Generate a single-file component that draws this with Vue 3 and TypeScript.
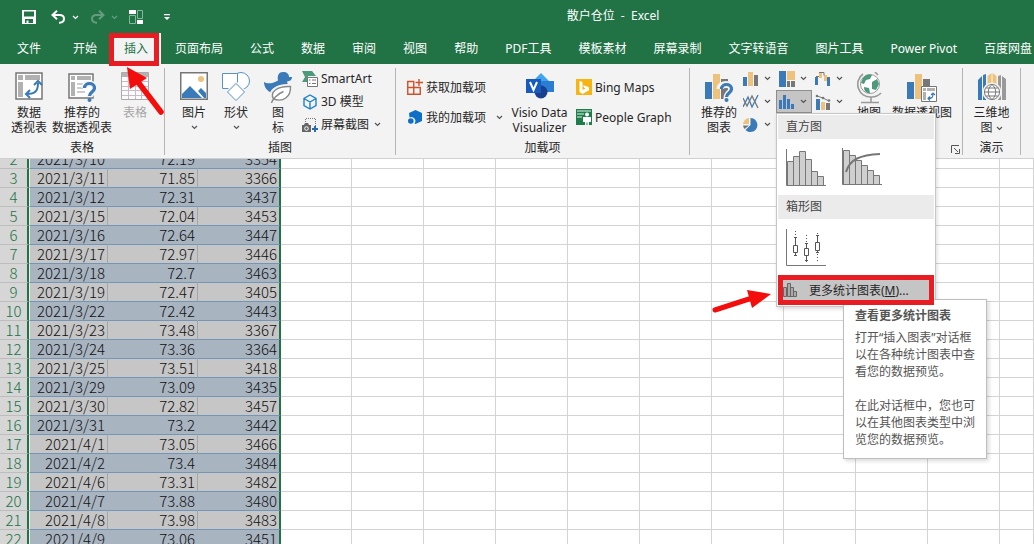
<script setup lang="ts">
interface Row {
  no: number
  date: string
  position: string
  index: number
}

const tabs: string[] = [
  '文件', '开始', '插入', '页面布局', '公式', '数据', '审阅', '视图', '帮助',
  'PDF工具', '模板素材', '屏幕录制', '文字转语音', '图片工具', 'Power Pivot', '百度网盘',
]
const activeTab = '插入'

const values: [string, string, number][] = [
  ['2021/3/10', '72.19', 3354],
  ['2021/3/11', '71.85', 3366],
  ['2021/3/12', '72.31', 3437],
  ['2021/3/15', '72.04', 3453],
  ['2021/3/16', '72.64', 3447],
  ['2021/3/17', '72.97', 3446],
  ['2021/3/18', '72.7', 3463],
  ['2021/3/19', '72.47', 3405],
  ['2021/3/22', '72.42', 3443],
  ['2021/3/23', '73.48', 3367],
  ['2021/3/24', '73.36', 3364],
  ['2021/3/25', '73.51', 3418],
  ['2021/3/29', '73.09', 3435],
  ['2021/3/30', '72.82', 3457],
  ['2021/3/31', '73.2', 3442],
  ['2021/4/1', '73.05', 3466],
  ['2021/4/2', '73.4', 3484],
  ['2021/4/6', '73.31', 3482],
  ['2021/4/7', '73.88', 3480],
  ['2021/4/8', '73.98', 3483],
  ['2021/4/9', '73.06', 3451],
]
const rows: Row[] = values.map(([date, position, index], i) => ({ no: i + 2, date, position, index }))
const emptyColumns = 11
</script>

<template>
  <div class="excel">
    <svg class="sprite" aria-hidden="true">
      <symbol id="chevron" viewBox="0 0 7 5">
        <path d="M1 1l2.5 2.5L6 1" fill="none" stroke="currentColor" stroke-width="1.2" />
      </symbol>
    </svg>

    <header class="top">
      <div class="titlebar">
        <div class="quick">
          <button type="button" aria-label="保存">
            <svg width="14" height="14" viewBox="0 0 14 14"><path d="M0 0h14v14H0zM2 1.500v5h10v-5zM3 9v4h1.500v-2.500h2V13H11V9z" fill="#fff" fill-rule="evenodd" /></svg>
          </button>
          <button type="button" class="undo" aria-label="撤消">
            <svg width="15" height="14" viewBox="0 0 15 14"><path d="M6 0.800L1.500 5 6 9.200M2 5h6.500c6 0 6 7.500 0 7.800H8" fill="none" stroke="#fff" stroke-width="2" /></svg>
            <svg class="chev" width="7" height="5"><use href="#chevron" /></svg>
          </button>
          <button type="button" class="undo faded" aria-label="恢复">
            <svg width="15" height="14" viewBox="0 0 15 14"><path d="M9 0.800L13.500 5 9 9.200M13 5H6.500c-6 0-6 7.500 0 7.800H7" fill="none" stroke="#fff" stroke-width="2" /></svg>
            <svg class="chev" width="7" height="5"><use href="#chevron" /></svg>
          </button>
          <button type="button" class="layout" aria-label="窗格">
            <svg width="15" height="14" viewBox="0 0 15 14"><path d="M0 0h7v4H0zM8 10h6v4H8z" fill="#fff" /><path d="M0.500 5.500h6v8h-6zM8.500 0.500h5v8h-5z" fill="none" stroke="#86b79b" /></svg>
          </button>
          <button type="button" aria-label="自定义快速访问工具栏">
            <svg width="6" height="7" viewBox="0 0 6 7"><path d="M0 0h6v1.200H0zM0 3h6L3 6z" fill="#fff" /></svg>
          </button>
        </div>
        <div class="title">散户仓位&nbsp; -&nbsp; Excel</div>
      </div>
      <nav class="tabs">
        <button v-for="t in tabs" :key="t" type="button" class="tab" :class="{ active: t === activeTab }">
          {{ t }}
          <span v-if="t === activeTab" class="frame"></span>
          <svg v-if="t === activeTab" class="arrow-up" width="40" height="50" viewBox="0 0 40 50">
            <path d="M12 16L35 46" stroke="#f30d0d" stroke-width="5.500" stroke-linecap="round" />
            <path d="M1 1L21 12 4 23z" fill="#f30d0d" />
          </svg>
        </button>
      </nav>
    </header>

    <section class="ribbon">
      <div class="group">
        <div class="body g1">
          <button type="button" class="big">
            <svg width="28" height="28" viewBox="0 0 28 28">
              <path d="M1 1h26v26H1z" fill="#fff" stroke="#777" stroke-width="1.500" />
              <path d="M3 3h5v5H3zM10 3h15v5H10zM3 10h5v15H3z" fill="#b1b1b1" />
              <path d="M12 22c8 0 11-3 11-11M19 13l4-4 4 4M15 18l-4 4 4 4" fill="none" stroke="#3b7ab8" stroke-width="2" />
            </svg>
            <span>数据<br>透视表</span>
          </button>
          <button type="button" class="big wide">
            <svg width="28" height="30" viewBox="0 0 28 30">
              <path d="M1 2h24v24H1z" fill="#fff" stroke="#777" stroke-width="1.500" />
              <path d="M3 4h4v4H3zM9 4h14v4H9zM3 10h4v14H3z" fill="#b1b1b1" />
              <path d="M9 12h6M9 16h6M9 20h8" stroke="#999" />
              <path d="M16 16c0-6 11-6 11 0 0 4-5 4-5 9" fill="none" stroke="#f3f3f3" stroke-width="6" />
              <path d="M16.500 16c0-6 10-6 10 0 0 4-5 4-5 8" fill="none" stroke="#3b7ab8" stroke-width="3.200" />
              <circle cx="21.500" cy="28" r="2" fill="#3b7ab8" />
            </svg>
            <span>推荐的<br>数据透视表</span>
          </button>
          <button type="button" class="big disabled" disabled>
            <svg width="28" height="28" viewBox="0 0 28 28">
              <path d="M.5.5h27v27H.5z" fill="#fdfafd" stroke="#aaa" />
              <path d="M1 1h26v4H1z" fill="#b3b3b3" />
              <path d="M1 9.500h26M1 14.500h26M1 18.500h26M1 23.500h26M7.500 5v22M14.500 5v22M20.500 5v22" stroke="#c4bec4" />
            </svg>
            <span>表格</span>
          </button>
        </div>
        <div class="label">表格</div>
      </div>
      <span class="sep"></span>

      <div class="group g2w">
        <div class="body g1">
          <button type="button" class="big">
            <svg width="28" height="28" viewBox="0 0 28 28">
              <path d="M.75.75h26.500v26.500H.75z" fill="#fff" stroke="#777" stroke-width="1.500" />
              <circle cx="21" cy="7" r="3" fill="#edc27c" />
              <path d="M2 26v-4l8-8 12 12zM18 19l3-3 5 5v5h-2z" fill="#3b7ab8" />
            </svg>
            <span>图片</span>
            <svg class="chev under" width="7" height="5"><use href="#chevron" /></svg>
          </button>
          <button type="button" class="big">
            <svg width="30" height="30" viewBox="0 0 30 30">
              <circle cx="20" cy="9" r="8.500" fill="#fff" stroke="#5a92c5" />
              <path d="M1.500 1.500h15v15h-15z" fill="#fff" stroke="#5a92c5" />
              <path d="M15 11l9 9-9 9-9-9z" fill="#fff" stroke="#f3f3f3" stroke-width="3" />
              <path d="M15 11.500l8.500 8.500-8.500 8.500L6.500 20z" fill="#fff" stroke="#5a92c5" />
            </svg>
            <span>形状</span>
            <svg class="chev under" width="7" height="5"><use href="#chevron" /></svg>
          </button>
          <button type="button" class="big">
            <svg width="28" height="31" viewBox="0 0 28 31">
              <path d="M0 10c3 2 8 2 14-1.500C13 3 15 0 19 0c4 0 6 2 6 5h3c0 3-2 4-5 4.500 1 3 1 5 0 7L8 21C3 19 0 15 0 10z" fill="#3b7ab8" />
              <path d="M9 27C5 20 12 13 27 14c1 11-7 17-18 13z" fill="#fff" stroke="#f3f3f3" stroke-width="4" />
              <path d="M9.500 27C5.500 20 13 14 26.500 14.500 27 25 19 30.500 9.500 27z" fill="#fff" stroke="#888" stroke-width="1.400" />
              <path d="M7.500 31c1-4 6-9 12-11.500" fill="none" stroke="#888" stroke-width="1.400" />
            </svg>
            <span>图<br>标</span>
          </button>
          <div class="col">
            <button type="button" class="small">
              <svg width="16" height="16" viewBox="0 0 16 16"><path d="M0 0h10l4 5H6v6H0l3-5z" fill="#4c9a7c" /><path d="M5.500 6.500h10v9h-10z" fill="#fff" stroke="#777" /><path d="M7 9h1.500M10 9h4M7 12.500h1.500M10 12.500h4" stroke="#777" /></svg>
              SmartArt
            </button>
            <button type="button" class="small">
              <svg width="16" height="16" viewBox="0 0 16 16"><path d="M8 1l6 3.500v7L8 15l-6-3.500v-7zM2 4.500L8 8l6-3.500M8 8v7" fill="none" stroke="#2182c4" stroke-width="1.400" /></svg>
              3D 模型
            </button>
            <button type="button" class="small">
              <svg width="16" height="16" viewBox="0 0 16 16"><path d="M4 1.500h10M3.500 2v4M13.500 2v7" stroke="#777" stroke-dasharray="1 1" /><path d="M0 8h2l1-2h3l1 2h2v7H0z" fill="#666" /><circle cx="4.500" cy="11.500" r="1.800" fill="none" stroke="#fff" /><path d="M13 9v6M10 12h6" stroke="#2b6cb0" stroke-width="2" /></svg>
              屏幕截图
              <svg class="chev" width="7" height="5"><use href="#chevron" /></svg>
            </button>
          </div>
        </div>
        <div class="label">插图</div>
      </div>
      <span class="sep"></span>

      <div class="group g3w">
        <div class="body g3">
          <div class="col addins">
            <button type="button" class="small">
              <svg width="16" height="16" viewBox="0 0 16 16"><path d="M.75 2.500h6v12.750h-6zM.75 8.500h12.500v6.750H.75M6.750 8.500v6.750M12 0v7M8.500 3.500H16" fill="none" stroke="#d1502a" stroke-width="1.400" /></svg>
              获取加载项
            </button>
            <button type="button" class="small spread">
              <svg width="16" height="16" viewBox="0 0 16 16"><path d="M8.500 1L15 4v8l-6.500 3-1-.5a4 4 0 0 0-5-6L2 4z" fill="#0f6fc6" /><circle cx="3.800" cy="12" r="2.800" fill="#0f6fc6" /></svg>
              我的加载项
              <svg class="chev" width="7" height="5"><use href="#chevron" /></svg>
            </button>
          </div>
          <button type="button" class="big visio">
            <svg width="28" height="28" viewBox="0 0 28 28">
              <path d="M15 1l10 10-10 10L5 11z" fill="#41a5ee" />
              <path d="M14 9h14v11H14z" fill="#2b7cd3" />
              <circle cx="15" cy="20" r="6.500" fill="#1a3f8f" />
              <path d="M0 7h15v14H0z" fill="#185abd" />
              <path d="M4 10l3.500 8L11 10" fill="none" stroke="#fff" stroke-width="2" />
            </svg>
            <span>Visio Data<br>Visualizer</span>
          </button>
          <div class="col">
            <button type="button" class="small">
              <svg width="16" height="16" viewBox="0 0 16 16"><path d="M0 0h16v16H0z" fill="#f6b513" /><path d="M3.500 2l3 1v8l3-1.500L8 8.500 7 6l6 2.200v3L6.500 15l-3-2z" fill="#fff" /></svg>
              Bing Maps
            </button>
            <button type="button" class="small">
              <svg width="16" height="16" viewBox="0 0 16 16"><path d="M0 0h16v16H0z" fill="#1e7d4b" /><path d="M1 2h14M1 5h7M1 8h5" stroke="#9fcbb3" stroke-width="1.500" /><circle cx="11" cy="5.500" r="2" fill="#fff" /><path d="M7 8h8v5h-2v3h-1.500v-2.500h-1V16H9v-3H7z" fill="#fff" /></svg>
              People Graph
            </button>
          </div>
        </div>
        <div class="label">加载项</div>
      </div>
      <span class="sep"></span>

      <div class="group g4w">
        <div class="body g4">
          <button type="button" class="big">
            <svg width="28" height="30" viewBox="0 0 28 30">
              <path d="M0 10h7v17H0z" fill="#3b7ab8" /><path d="M8 2h7v25H8z" fill="#edc27c" /><path d="M16 7h7v20h-7z" fill="#777" />
              <path d="M15 17c0-6 12-6 12 0 0 4-5 4-5 9v4" fill="none" stroke="#f3f3f3" stroke-width="7" />
              <path d="M16.500 17c0-6 10-6 10 0 0 4-5 4-5 8" fill="none" stroke="#3b7ab8" stroke-width="3.200" />
              <circle cx="21.500" cy="28" r="2" fill="#3b7ab8" />
            </svg>
            <span>推荐的<br>图表</span>
          </button>
          <div class="minis">
            <button type="button" class="mini" aria-label="柱形图">
              <svg width="16" height="16" viewBox="0 0 16 16"><path d="M0 6h4v9H0z" fill="#3b7ab8" /><path d="M5 1h5v14H5z" fill="#edc27c" /><path d="M11 4h4v11h-4z" fill="#777" /></svg>
              <svg class="chev" width="7" height="5"><use href="#chevron" /></svg>
            </button>
            <button type="button" class="mini" aria-label="层次结构图">
              <svg width="16" height="16" viewBox="0 0 16 16"><path d="M0 0h7v16H0z" fill="#3b7ab8" /><path d="M8 0h8v9H8z" fill="#edc27c" /><path d="M8 10h3v6H8zM12 10h4v6h-4z" fill="#777" /></svg>
              <svg class="chev" width="7" height="5"><use href="#chevron" /></svg>
            </button>
            <button type="button" class="mini" aria-label="瀑布图">
              <svg width="16" height="16" viewBox="0 0 16 16"><path d="M0 6h3v8H0zM12 7h3v8h-3z" fill="#3b7ab8" /><path d="M4 1h3v6H4zM9 4h3v6H9z" fill="#edc27c" /><path d="M1 5.500h3M4 1.500h5v3M12 6.500h3" fill="none" stroke="#777" /></svg>
              <svg class="chev" width="7" height="5"><use href="#chevron" /></svg>
            </button>
            <button type="button" class="mini" aria-label="折线图">
              <svg width="16" height="16" viewBox="0 0 16 16"><path d="M0 13L5 3l4 10 6-12" fill="none" stroke="#3b7ab8" stroke-width="1.300" /><path d="M0 4l4 8 5-10 6 12" fill="none" stroke="#777" stroke-width="1.300" /></svg>
              <svg class="chev" width="7" height="5"><use href="#chevron" /></svg>
            </button>
            <div class="anchor">
              <button type="button" class="mini pressed" aria-label="统计图表" aria-expanded="true">
                <svg width="16" height="16" viewBox="0 0 16 16"><path d="M0 6h3v9H0zM4 1h3v14H4zM8 5h3v10H8zM12 10h3v5h-3z" fill="#3b7ab8" /></svg>
                <svg class="chev" width="7" height="5"><use href="#chevron" /></svg>
              </button>
              <div class="menu">
                <h3>直方图</h3>
                <div class="gallery">
                  <button type="button" aria-label="直方图">
                    <svg width="40" height="38" viewBox="0 0 40 38"><path d="M1.500 13.500h6v24h-6zM7.500 8.500h6v29h-6zM13.500 3.500h6v34h-6zM19.500 11.500h6v26h-6zM25.500 23.500h6v14h-6zM31.500 28.500h6v9h-6z" fill="#cfcfcf" stroke="#777" /><path d="M.5 1v36.500H40" fill="none" stroke="#777" /></svg>
                  </button>
                  <button type="button" aria-label="排列图">
                    <svg width="40" height="38" viewBox="0 0 40 38"><path d="M1.500 2.500h6v34h-6zM7.500 7.500h6v29h-6zM13.500 12.500h6v24h-6zM19.500 17.500h6v19h-6zM25.500 22.500h6v14h-6zM31.500 27.500h6v9h-6z" fill="#cfcfcf" stroke="#777" /><path d="M.5 0v36.500H40" fill="none" stroke="#777" /><path d="M4 24C8 11 18 7 38 6" fill="none" stroke="#777" stroke-width="2" /></svg>
                  </button>
                </div>
                <h3>箱形图</h3>
                <div class="gallery">
                  <button type="button" aria-label="箱形图">
                    <svg width="40" height="38" viewBox="0 0 40 38"><path d="M.5 1v36.500H40" fill="none" stroke="#777" /><path d="M9.500 3v6M20.500 7v7M31.500 5v3M20.500 33v3M31.500 26v9" stroke="#555" stroke-dasharray="1 2" /><path d="M9.500 9v18M20.500 15v18M31.500 7v18M8 9.500h3M8 27.500h3M19 15.500h3M19 32.500h3M30 7.500h3M30 24.500h3" stroke="#555" /><path d="M7.500 17.500h4v7h-4zM18.500 20.500h4v7h-4zM29.500 14.500h4v8h-4z" fill="#fff" stroke="#555" /></svg>
                  </button>
                </div>
                <div class="more-wrap">
                  <div class="tip" role="tooltip">
                    <strong>查看更多统计图表</strong>
                    <p>打开“插入图表”对话框以在各种统计图表中查看您的数据预览。</p>
                    <p>在此对话框中，您也可以在其他图表类型中浏览您的数据预览。</p>
                  </div>
                  <button type="button" class="more">
                    <svg width="14" height="14" viewBox="0 0 14 14"><path d="M.5 4.500h3v9h-3zM4.500.5h3v13h-3zM7.500 4.500h3v9h-3zM10.500 8.500h3v5h-3z" fill="#aaa" stroke="#666" /></svg>
                    <span>更多统计图表(<u>M</u>)...</span>
                  </button>
                  <svg class="arrow-right" width="62" height="26" viewBox="0 0 62 26">
                    <path d="M4 20L38 9" stroke="#f30d0d" stroke-width="5" stroke-linecap="round" />
                    <path d="M60 4L36 0 41 18z" fill="#f30d0d" />
                  </svg>
                </div>
              </div>
            </div>
            <button type="button" class="mini" aria-label="组合图">
              <svg width="16" height="16" viewBox="0 0 16 16"><path d="M1 5h4v11H1z" fill="#3b7ab8" /><path d="M6 8h4v8H6z" fill="#edc27c" /><path d="M11 9h4v7h-4z" fill="#777" /><path d="M2 2l6 2 6 3" fill="none" stroke="#777" /><circle cx="2" cy="2" r="1.300" fill="#777" /><circle cx="8" cy="4" r="1.300" fill="#777" /><circle cx="14" cy="6.500" r="1.300" fill="#777" /></svg>
              <svg class="chev" width="7" height="5"><use href="#chevron" /></svg>
            </button>
            <button type="button" class="mini" aria-label="饼图">
              <svg width="16" height="16" viewBox="0 0 16 16"><path d="M7.500 8V1a7 7 0 1 1-5 12z" fill="#3b7ab8" /><path d="M6 7H0a6.500 6.500 0 0 1 6-6z" fill="#edc27c" /><path d="M6 8.500L1.500 12A7 7 0 0 1 0 8.500z" fill="#777" /></svg>
              <svg class="chev" width="7" height="5"><use href="#chevron" /></svg>
            </button>
          </div>
          <button type="button" class="big">
            <svg width="28" height="32" viewBox="0 0 28 32">
              <circle cx="15" cy="12" r="9.500" fill="#fff" stroke="#999" />
              <path d="M8 6c3-4 7-4 9-3l-2 4-4 1-2 4-3-1zM17 10l5-3 2 5-3 6-4-1zM9 15l5 1 1 5c-4 0-6-2-6-6z" fill="#4c9a7c" />
              <path d="M8 2C-2 9 3 26 17 25c4 0 7-2 9-4M16 25v5M6 30.500h18M20 0l3 3" fill="none" stroke="#999" stroke-width="1.600" />
            </svg>
            <span>地图</span>
          </button>
          <button type="button" class="big wide">
            <svg width="30" height="30" viewBox="0 0 30 30">
              <path d="M0 10h7v17H0z" fill="#3b7ab8" /><path d="M8 2h7v25H8z" fill="#edc27c" /><path d="M16 7h7v9h-7z" fill="#777" />
              <path d="M14.500 14.500h15v15h-15z" fill="#fff" stroke="#777" />
              <path d="M16 16h3v3h-3zM20 16h8v3h-8zM16 20h3v8h-3z" fill="#b1b1b1" />
              <path d="M21 26.500c4 0 5-1 5-5M24 23l2-2 2 2M23 24.500l-2 2 2 2" fill="none" stroke="#3b7ab8" stroke-width="1.200" />
            </svg>
            <span>数据透视图</span>
          </button>
        </div>
        <div class="label">图表</div>
        <button type="button" class="launcher" aria-label="图表选项">
          <svg width="9" height="9" viewBox="0 0 9 9"><path d="M.5 8V.5H8M3 3l4 4M8.500 4v4.500H4" fill="none" stroke="#555" /></svg>
        </button>
      </div>
      <span class="sep"></span>

      <div class="group g5w">
        <div class="body g5">
          <button type="button" class="big">
            <svg width="30" height="30" viewBox="0 0 30 30">
              <path d="M1 8l4-4v24H1zM6 3l3-1v26H6z" fill="#3b7ab8" /><path d="M10.500 4l4-3v27h-4zM15.500 1l4 3v24h-4z" fill="#edc27c" /><path d="M21 4l3-1v25h-3zM25 4l4 3v21h-4z" fill="#999" />
              <circle cx="15" cy="20" r="8.500" fill="#fff" stroke="#f3f3f3" stroke-width="2" />
              <path d="M15 12.500a7.500 7.500 0 1 0 .01 0M15 12.500c-5 4-5 11 0 15c5-4 5-11 0-15M7.500 20h15M9 16h12M9 24h12" fill="none" stroke="#777" />
            </svg>
            <span>三维地<br>图 <svg class="chev" width="7" height="5"><use href="#chevron" /></svg></span>
          </button>
        </div>
        <div class="label">演示</div>
      </div>
      <span class="sep"></span>
    </section>

    <main class="sheet">
      <table>
        <colgroup>
          <col class="c-no"><col class="c-a"><col class="c-b"><col class="c-c"><col class="c-d">
          <col v-for="n in emptyColumns - 2" :key="n" class="c-e">
          <col>
        </colgroup>
        <tbody>
          <tr v-for="r in rows" :key="r.no" :class="{ band: r.no % 2 === 0 }">
            <th scope="row">{{ r.no }}</th>
            <td class="sel a">{{ r.date }}</td>
            <td class="sel b">{{ r.position }}</td>
            <td class="sel c">{{ r.index }}</td>
            <td v-for="n in emptyColumns" :key="n"></td>
          </tr>
        </tbody>
      </table>
    </main>
  </div>
</template>

<style>
body {
  margin: 0;
}
</style>

<style scoped>
.excel {
  position: relative;
  display: flex;
  flex-direction: column;
  height: 100vh;
  overflow: hidden;
  background: #fff;
  color: #262626;
  font-family: "Noto Sans", "Noto Sans CJK SC", sans-serif;
  font-size: 12px;
  line-height: 15px;
}
.excel * {
  box-sizing: border-box;
}
.sprite {
  position: absolute;
  width: 0;
  height: 0;
}
svg {
  display: block;
  flex: none;
}
button {
  margin: 0;
  padding: 0;
  border: 0;
  background: none;
  color: inherit;
  font: inherit;
  white-space: nowrap;
}
.chev {
  color: #555;
}
.top {
  flex: none;
  background: #217346;
  color: #fff;
}
.titlebar {
  display: flex;
  align-items: center;
  height: 32px;
}
.quick {
  display: flex;
  align-items: center;
  gap: 15px;
  width: 192px;
  padding: 2px 0 0 22px;
}
.quick .undo {
  display: flex;
  align-items: center;
  gap: 6px;
}
.quick .layout {
  margin: 0 5px 0 -4px;
}
.quick .undo + .undo {
  margin-left: -4px;
}
.quick .chev {
  color: #fff;
}
.faded {
  opacity: 0.3;
}
.title {
  flex: 1;
  padding-bottom: 2px;
  text-align: center;
}
.tabs {
  display: flex;
  height: 32px;
}
.tab {
  position: relative;
  flex: none;
  padding: 0 13px 0 14px;
}
.tab:first-child {
  padding: 0 18px 0 17px;
}
.tab.active {
  z-index: 3;
  margin-top: 1px;
  background: #f3f3f3;
  color: #217346;
}
.frame {
  position: absolute;
  inset: 0 2px -2px -1px;
  border: 5px solid #e81c23;
}
.arrow-up {
  position: absolute;
  left: 16px;
  top: 33px;
}
.ribbon {
  position: relative;
  z-index: 2;
  display: flex;
  flex: none;
  height: 95px;
  border-bottom: 1px solid #d0d0d0;
  background: #f3f3f3;
}
.sep {
  flex: none;
  width: 1px;
  margin: 4px 0 3px;
  background: #b5b5b5;
}
.group {
  position: relative;
  display: flex;
  flex: none;
  flex-direction: column;
  padding-top: 3px;
}
.group:first-child {
  width: 164px;
}
.g2w {
  width: 230px;
}
.g3w {
  width: 293px;
}
.g4w {
  width: 272px;
}
.g5w {
  width: 57px;
}
.body {
  display: flex;
  flex: none;
  height: 73px;
}
.g1 {
  padding-left: 8px;
}
.g3 {
  padding-left: 11px;
}
.g4 {
  padding-left: 8px;
}
.g5 {
  justify-content: center;
}
.label {
  height: 16px;
  line-height: 16px;
  text-align: center;
}
.big {
  display: flex;
  flex: none;
  flex-direction: column;
  align-items: center;
  width: 42px;
  padding-top: 5px;
}
.big > svg:first-child {
  margin-bottom: auto;
}
.big > span {
  height: 30px;
  margin-bottom: 5px;
}
.big .under {
  height: 5px;
  margin: -15px 0 10px;
}
.big span .chev {
  display: inline-block;
  vertical-align: middle;
}
.wide {
  width: 64px;
}
.disabled {
  color: #a6a6a6;
}
.col {
  display: flex;
  flex-direction: column;
  padding-left: 3px;
}
.small {
  display: flex;
  align-items: center;
  gap: 3px;
  height: 23px;
}
.g3 .col {
  padding: 5px 0 0;
}
.g3 .small {
  height: 30px;
}
.addins,
.spread {
  width: 96px;
}
.small .chev {
  margin-left: 2px;
}
.small.spread .chev {
  margin-left: auto;
}
.visio {
  width: 73px;
}
.minis {
  display: grid;
  grid-template-columns: repeat(3, 36px);
  grid-auto-rows: 23px;
}
.mini {
  display: flex;
  align-items: center;
  gap: 5px;
  width: 36px;
  height: 23px;
  padding-left: 3px;
}
.pressed {
  border: 1px solid #8e8e8e;
  padding-left: 2px;
  background: #c5c5c5;
}
.anchor {
  position: relative;
}
.menu {
  position: absolute;
  left: 0;
  top: 23px;
  z-index: 4;
  width: 160px;
  padding: 1px;
  border: 1px solid #c6c6c6;
  background: #fff;
  box-shadow: 1px 2px 4px rgba(0, 0, 0, 0.15);
}
.menu h3 {
  margin: 0;
  padding-left: 8px;
  background: #ebebeb;
  color: #444;
  font-size: 12px;
  font-weight: 400;
  line-height: 24px;
}
.gallery {
  display: flex;
  gap: 16px;
  height: 56px;
  padding: 9px 8px;
}
.more-wrap {
  position: relative;
}
.more {
  position: relative;
  display: flex;
  align-items: center;
  gap: 12px;
  width: 156px;
  height: 30px;
  padding-right: 4px;
  border: 5px solid #e81c23;
  background: #c5c5c5;
}
.tip {
  position: absolute;
  left: 65px;
  top: 24px;
  width: 144px;
  padding: 7px 10px 10px 11px;
  border: 1px solid #bebebe;
  background: #fff;
  box-shadow: 2px 2px 4px rgba(0, 0, 0, 0.15);
  color: #555;
  line-height: 17px;
}
.tip p {
  margin: 5px 0 0;
}
.tip p + p {
  margin-top: 17px;
}
.arrow-right {
  position: absolute;
  left: -67px;
  top: 15px;
}
.launcher {
  position: absolute;
  right: 2px;
  bottom: 4px;
}
.sheet {
  flex: 1;
  min-height: 0;
  overflow: hidden;
}
table {
  width: 100%;
  margin-top: -9px;
  border-collapse: separate;
  border-spacing: 0;
  table-layout: fixed;
}
.c-no {
  width: 29px;
}
.c-a {
  width: 79px;
}
.c-b {
  width: 90px;
}
.c-c {
  width: 83px;
}
.c-d {
  width: 71px;
}
.c-e {
  width: 72px;
}
th,
td {
  height: 19px;
  padding: 0;
  border-right: 1px solid #d4d4d4;
  border-bottom: 1px solid #d4d4d4;
  font: 300 15px/18px "Noto Sans CJK SC", sans-serif;
}
th {
  border-right: 2px solid #217346;
  border-bottom-color: #bdbdbd;
  background: #d6d6d6;
  color: #217346;
  text-align: center;
}
.sel {
  padding-right: 2px;
  border-right-color: #a6a6a6;
  border-bottom-color: #7295b8;
  background: #c6c6c6;
  color: #111;
  text-align: right;
}
.band .sel {
  border-right-color: #a9b4c1;
  background: #a9b4c1;
}
.sel.a {
  border-left: 1px solid #eee;
}
.sel.c,
.band .sel.c {
  border-right: 2px solid #217346;
}
</style>
